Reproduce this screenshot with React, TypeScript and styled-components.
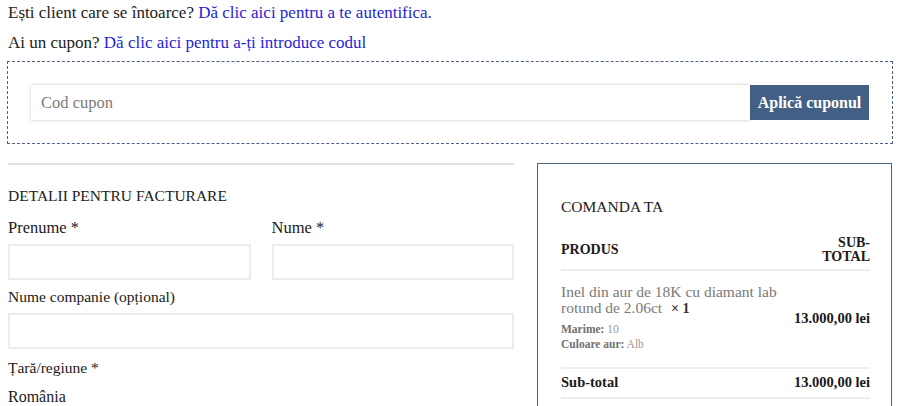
import React from 'react';
import styled, { createGlobalStyle } from 'styled-components';

const GlobalStyle = createGlobalStyle`
  html, body { margin: 0; padding: 0; background: #fff; }
  body {
    font-family: "Liberation Serif", "DejaVu Serif", serif;
    color: #1f1f1f;
    overflow: hidden;
  }
`;

const Page = styled.div`
  width: 900px;
  height: 406px;
  overflow: hidden;
  padding: 0 7px;
  box-sizing: border-box;
`;

const Notice = styled.p`
  margin: 0;
  padding-left: 1px;
  font-size: 17px;
  line-height: 30px;
  color: #222;
  a { color: #1f1fd4; text-decoration: none; }
  &:first-child { margin-top: -2px; }
`;

const CouponBox = styled.form`
  margin-top: 3px;
  border: 1px dashed #4d6185;
  padding: 23px;
  display: flex;
`;

const CouponInput = styled.input`
  flex: 1;
  height: 35px;
  box-sizing: border-box;
  border: none;
  box-shadow: 0 0 3px rgba(0, 0, 0, 0.25);
  padding: 0 10px;
  font-family: inherit;
  font-size: 16.5px;
  color: #333;
  outline: none;
  &::placeholder { color: #7c7c7c; }
`;

const ApplyButton = styled.button`
  height: 35px;
  width: 119px;
  border: none;
  background: #445f86;
  color: #fff;
  font-family: inherit;
  font-weight: bold;
  font-size: 16px;
  padding: 0;
`;

const Columns = styled.div`
  display: grid;
  grid-template-columns: 506px 355px;
  justify-content: space-between;
  margin-top: 19px;
  padding: 0 1px;
`;

const Billing = styled.section`
  border-top: 2px solid #e2e2e2;
`;

const Heading = styled.h3`
  margin: 0;
  font-weight: normal;
  font-size: 15.5px;
  line-height: 20px;
  text-transform: uppercase;
  color: #1a1a1a;
`;

const BillingHeading = styled(Heading)`
  margin-top: 21px;
  margin-bottom: 4px;
`;

const FieldRow = styled.div`
  display: grid;
  grid-template-columns: 1fr 1fr;
  gap: 21px;
`;

const Field = styled.label<{ $gap?: number }>`
  display: flex;
  flex-direction: column;
  margin-top: ${p => p.$gap ?? 8}px;
`;

const Label = styled.span<{ $plain?: boolean }>`
  font-size: ${p => (p.$plain ? '15.5px' : '16.5px')};
  line-height: 20px;
  margin-bottom: 6px;
  color: #1a1a1a;
`;

const TextBox = styled.input`
  height: 36px;
  box-sizing: border-box;
  border: 2px solid #ececec;
  outline: none;
  font-family: inherit;
  font-size: 15px;
  padding: 0 8px;
`;

const Country = styled.div`
  font-size: 16px;
  line-height: 20px;
  margin-top: 3px;
  color: #1a1a1a;
`;

const OrderBox = styled.aside`
  border: 1px solid #4d6185;
  border-bottom: none;
  padding: 33px 21px 0 23px;
  height: 260px;
`;

const OrderTable = styled.div`
  margin-top: 19px;
`;

const Row = styled.div`
  display: flex;
  justify-content: space-between;
  align-items: center;
  border-bottom: 2px solid #eeeeee;
`;

const HeadRow = styled(Row)`
  padding-bottom: 5px;
`;

const HeadCell = styled.div<{ $right?: boolean }>`
  font-weight: bold;
  font-size: 14px;
  line-height: 14px;
  text-transform: uppercase;
  text-align: ${p => (p.$right ? 'right' : 'left')};
  color: #1a1a1a;
`;

const ItemRow = styled(Row)`
  padding: 13px 0 15px;
`;

const ProductName = styled.div`
  color: #7a7a7a;
  font-size: 15.5px;
  line-height: 16px;
  width: 226px;
  strong { color: #333; font-weight: bold; font-size: 14px; line-height: 1; margin-left: 5px; }
`;

const Meta = styled.div`
  font-size: 11.5px;
  line-height: 15px;
  color: #999;
  b { color: #707070; }
`;

const MetaList = styled.div`
  margin-top: 6px;
`;

const Amount = styled.span`
  font-weight: bold;
  font-size: 14.5px;
  color: #1a1a1a;
`;

const SubRow = styled(Row)`
  padding: 3px 0 5px;
  line-height: 20px;
`;

export default function App() {
  return (
    <Page>
      <GlobalStyle />
      <Notice>
        Ești client care se întoarce? <a href="#">Dă clic aici pentru a te autentifica.</a>
      </Notice>
      <Notice>
        Ai un cupon? <a href="#">Dă clic aici pentru a-ți introduce codul</a>
      </Notice>
      <CouponBox onSubmit={e => e.preventDefault()}>
        <CouponInput placeholder="Cod cupon" />
        <ApplyButton type="submit">Aplică cuponul</ApplyButton>
      </CouponBox>
      <Columns>
        <Billing>
          <BillingHeading>Detalii pentru facturare</BillingHeading>
          <FieldRow>
            <Field>
              <Label>Prenume *</Label>
              <TextBox />
            </Field>
            <Field>
              <Label>Nume *</Label>
              <TextBox />
            </Field>
          </FieldRow>
          <Field $gap={7}>
            <Label $plain>Nume companie (opțional)</Label>
            <TextBox />
          </Field>
          <Field $gap={9}>
            <Label $plain>Țară/regiune *</Label>
          </Field>
          <Country>România</Country>
        </Billing>
        <OrderBox>
          <Heading>Comanda ta</Heading>
          <OrderTable>
            <HeadRow>
              <HeadCell>Produs</HeadCell>
              <HeadCell $right>
                Sub-
                <br />
                total
              </HeadCell>
            </HeadRow>
            <ItemRow>
              <div>
                <ProductName>
                  Inel din aur de 18K cu diamant lab rotund de 2.06ct <strong>× 1</strong>
                </ProductName>
                <MetaList>
                  <Meta>
                    <b>Marime:</b> 10
                  </Meta>
                  <Meta>
                    <b>Culoare aur:</b> Alb
                  </Meta>
                </MetaList>
              </div>
              <Amount>13.000,00 lei</Amount>
            </ItemRow>
            <SubRow>
              <Amount>Sub-total</Amount>
              <Amount>13.000,00 lei</Amount>
            </SubRow>
          </OrderTable>
        </OrderBox>
      </Columns>
    </Page>
  );
}
